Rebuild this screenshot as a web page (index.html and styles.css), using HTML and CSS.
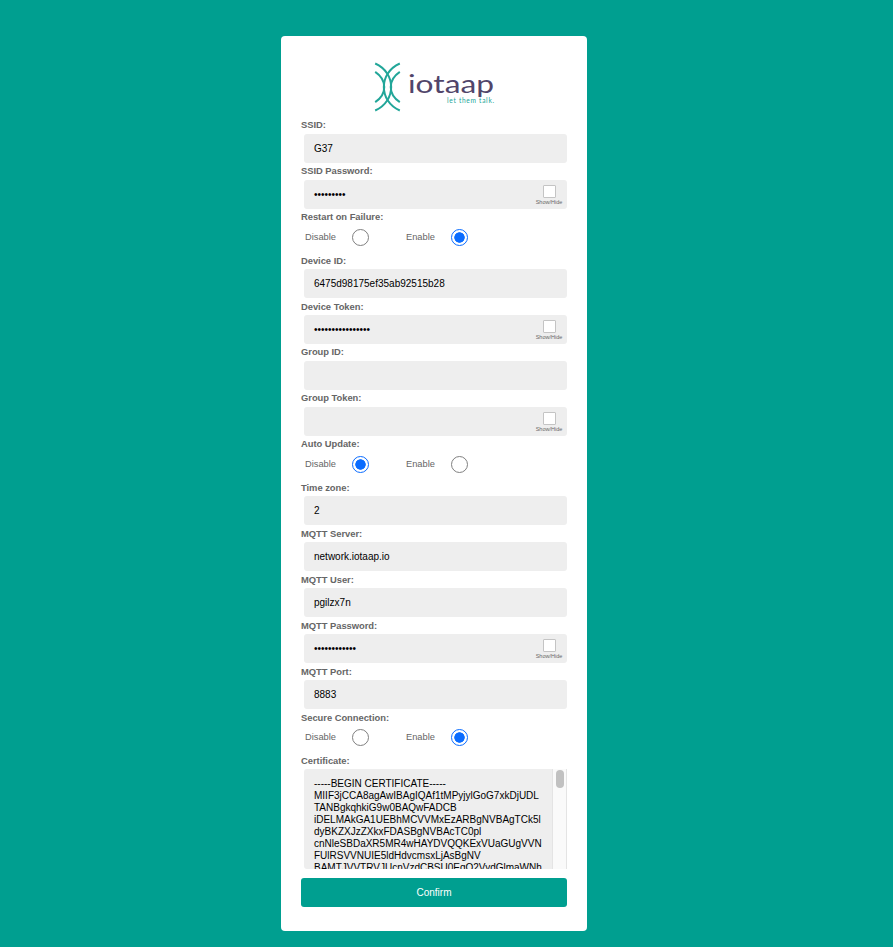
FILE: index.html
```html
<!DOCTYPE html>
<html lang="en">
<head>
<meta charset="utf-8">
<title>IoTaaP configuration</title>
<link rel="stylesheet" href="styles.css">
</head>
<body>
<main class="card">
  <svg class="logo" width="124" height="52" viewBox="372 61 124 52">
    <g class="waves">
      <path d="M375.2 63.5C396.5 73 396.5 101 375.2 110.5"/>
      <path d="M399.8 63.5C378.5 73 378.5 101 399.8 110.5"/>
      <path d="M375.2 71.8C387.3 80 387.3 94 375.2 102.2"/>
      <path d="M399.8 71.8C387.7 80 387.7 94 399.8 102.2"/>
    </g>
    <text class="brand" x="408" y="93" textLength="86" lengthAdjust="spacingAndGlyphs">iotaap</text>
    <text class="tagline" x="447" y="103.4" textLength="47" lengthAdjust="spacing">let them talk.</text>
  </svg>
  <div class="row"><div class="label raised">SSID:</div><div class="field">G37</div></div>
  <div class="row"><div class="label raised">SSID Password:</div><div class="field">•••••••••<span class="toggle"><i class="check"></i>Show/Hide</span></div></div>
  <div class="row"><div class="label raised">Restart on Failure:</div><div class="radios"><span class="option">Disable</span><i class="radio"></i><span class="option">Enable</span><i class="radio on"></i></div></div>
  <div class="row"><div class="label">Device ID:</div><div class="field">6475d98175ef35ab92515b28</div></div>
  <div class="row"><div class="label">Device Token:</div><div class="field">••••••••••••••••<span class="toggle"><i class="check"></i>Show/Hide</span></div></div>
  <div class="row"><div class="label raised">Group ID:</div><div class="field"></div></div>
  <div class="row"><div class="label raised">Group Token:</div><div class="field"><span class="toggle"><i class="check"></i>Show/Hide</span></div></div>
  <div class="row"><div class="label raised">Auto Update:</div><div class="radios"><span class="option">Disable</span><i class="radio on"></i><span class="option">Enable</span><i class="radio"></i></div></div>
  <div class="row"><div class="label">Time zone:</div><div class="field">2</div></div>
  <div class="row"><div class="label">MQTT Server:</div><div class="field">network.iotaap.io</div></div>
  <div class="row"><div class="label">MQTT User:</div><div class="field">pgilzx7n</div></div>
  <div class="row"><div class="label">MQTT Password:</div><div class="field">••••••••••••<span class="toggle"><i class="check"></i>Show/Hide</span></div></div>
  <div class="row"><div class="label">MQTT Port:</div><div class="field">8883</div></div>
  <div class="row"><div class="label">Secure Connection:</div><div class="radios"><span class="option">Disable</span><i class="radio"></i><span class="option">Enable</span><i class="radio on"></i></div></div>
  <div class="row"><div class="label">Certificate:</div>
    <div class="area"><div class="pem">-----BEGIN CERTIFICATE-----
MIIF3jCCA8agAwIBAgIQAf1tMPyjylGoG7xkDjUDL
TANBgkqhkiG9w0BAQwFADCB
iDELMAkGA1UEBhMCVVMxEzARBgNVBAgTCk5l
dyBKZXJzZXkxFDASBgNVBAcTC0pl
cnNleSBDaXR5MR4wHAYDVQQKExVUaGUgVVN
FUlRSVVNUIE5ldHdvcmsxLjAsBgNV
BAMTJVVTRVJUcnVzdCBSU0EgQ2VydGlmaWNh</div><div class="track"><div class="thumb"></div></div></div>
  </div>
  <button class="confirm">Confirm</button>
</main>
</body>
</html>
```

FILE: styles.css
```css
* { box-sizing: border-box; }
body {
  margin: 0;
  height: 947px;
  padding-top: 36px;
  overflow: hidden;
  background: #009f90;
  font: 10px "Liberation Sans", Arial, sans-serif;
}
.card {
  width: 306px;
  height: 895px;
  margin-left: 281px;
  padding: 25px 20px 24px;
  border-radius: 4px;
  background: #fff;
}
.logo { display: block; margin: 0 0 4px 71px; }
.waves { fill: none; stroke: #22a699; stroke-width: 2; }
.brand { font: 25px Lato, sans-serif; fill: #51456a; }
.tagline { font: 6.6px Lato, sans-serif; fill: #22a699; }
.label {
  height: 17px;
  line-height: 17px;
  font-size: 9.4px;
  font-weight: bold;
  color: #666;
  letter-spacing: -0.03px;
}
.label.raised { line-height: 15px; }
.field {
  position: relative;
  height: 29px;
  margin-left: 3px;
  padding-left: 10px;
  line-height: 29px;
  border-radius: 3px;
  background: #eee;
  color: #000;
}
.toggle {
  position: absolute;
  right: 0;
  top: 5px;
  width: 36px;
  display: flex;
  flex-direction: column;
  align-items: center;
  gap: 1px;
  font-size: 5.5px;
  line-height: 7px;
  color: #666;
}
.check {
  width: 13px;
  height: 13px;
  border: 1px solid #c4c4c4;
  border-radius: 1px;
  background: #fff;
}
.radios {
  display: grid;
  grid-template-columns: 47px 54px 45px 20px;
  align-items: center;
  height: 26px;
  padding: 0 0 4px 4px;
}
.option { font-size: 9.3px; color: #666; }
.radio {
  width: 17px;
  height: 17px;
  border: 1px solid #808080;
  border-radius: 50%;
  background: #fff;
}
.radio.on {
  border-color: #0a6cff;
  background: radial-gradient(circle, #0a6cff 4.9px, #fff 5.5px);
}
.area {
  display: flex;
  height: 100px;
  margin-left: 3px;
  border-radius: 3px 0 0 3px;
  background: #eee;
  overflow: hidden;
}
.pem {
  width: 248px;
  padding: 9px 0 0 10px;
  line-height: 12px;
  white-space: pre;
}
.track {
  width: 15px;
  padding: 1px 2px 0 3px;
  border: solid #e4e4e4;
  border-width: 0 1px;
  background: #fafafa;
}
.thumb { width: 8px; height: 18px; border-radius: 4px; background: #c1c1c1; }
.confirm {
  display: block;
  width: 266px;
  height: 29px;
  margin-top: 9px;
  padding: 0;
  border: 0;
  border-radius: 3px;
  background: #009f90;
  color: #fff;
  font: 10px "Liberation Sans", Arial, sans-serif;
}
```
